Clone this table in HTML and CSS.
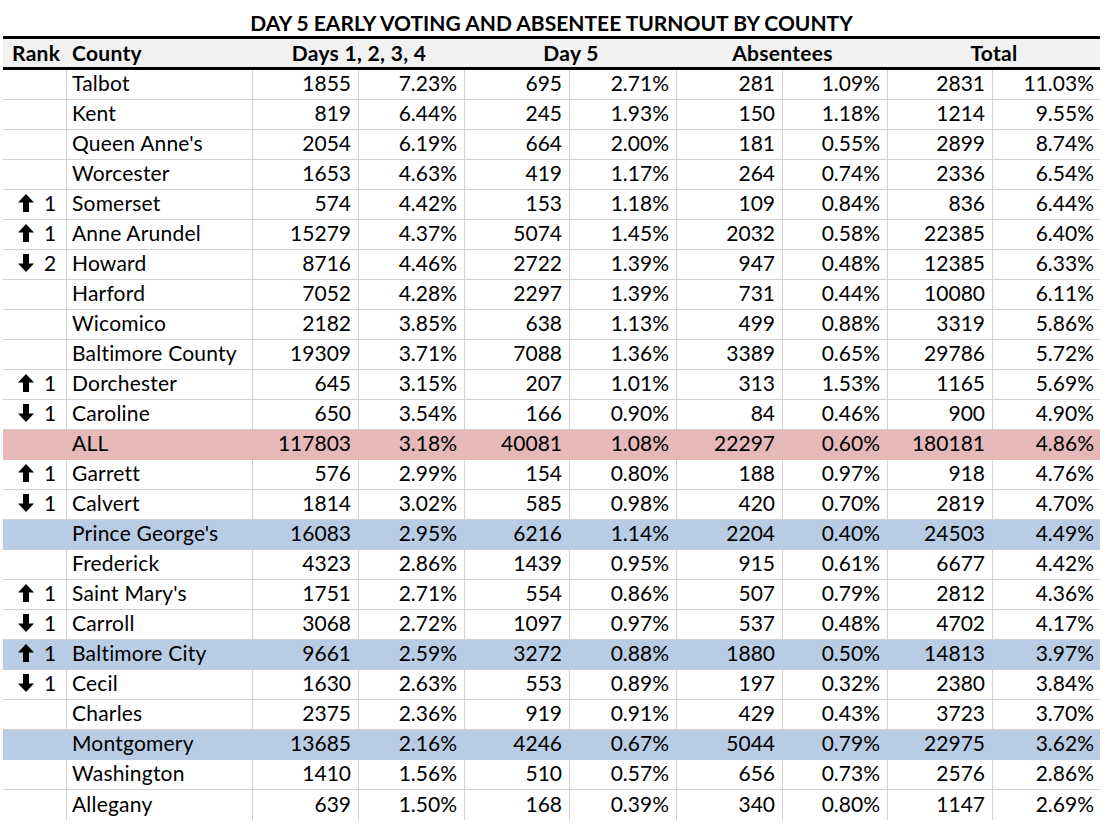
FILE: index.html
```html
<!DOCTYPE html>
<html lang="en">
<head>
<meta charset="utf-8">
<title>Day 5 Early Voting and Absentee Turnout by County</title>
<link rel="stylesheet" href="styles.css">
</head>
<body>
<div class="sheet">
  <h1 class="title">DAY 5 EARLY VOTING AND ABSENTEE TURNOUT BY COUNTY</h1>
  <table class="grid">
    <colgroup>
      <col class="c-rank"><col class="c-county">
      <col class="c-106"><col class="c-106">
      <col class="c-105"><col class="c-107">
      <col class="c-106"><col class="c-105">
      <col class="c-105"><col class="c-107">
    </colgroup>
    <thead>
      <tr>
        <th class="rank">Rank</th>
        <th class="county">County</th>
        <th colspan="2">Days 1, 2, 3, 4</th>
        <th colspan="2">Day 5</th>
        <th colspan="2">Absentees</th>
        <th colspan="2">Total</th>
      </tr>
    </thead>
    <tbody>
      <tr><td class="rank"></td><td class="county">Talbot</td><td>1855</td><td>7.23%</td><td>695</td><td>2.71%</td><td>281</td><td>1.09%</td><td>2831</td><td>11.03%</td></tr>
      <tr><td class="rank"></td><td class="county">Kent</td><td>819</td><td>6.44%</td><td>245</td><td>1.93%</td><td>150</td><td>1.18%</td><td>1214</td><td>9.55%</td></tr>
      <tr><td class="rank"></td><td class="county">Queen Anne's</td><td>2054</td><td>6.19%</td><td>664</td><td>2.00%</td><td>181</td><td>0.55%</td><td>2899</td><td>8.74%</td></tr>
      <tr><td class="rank"></td><td class="county">Worcester</td><td>1653</td><td>4.63%</td><td>419</td><td>1.17%</td><td>264</td><td>0.74%</td><td>2336</td><td>6.54%</td></tr>
      <tr><td class="rank"><span class="move"><svg class="arrow" viewBox="0 0 16 18"><polygon points="8,0 16,8.5 11,8.5 11,18 5,18 5,8.5 0,8.5"/></svg><span>1</span></span></td><td class="county">Somerset</td><td>574</td><td>4.42%</td><td>153</td><td>1.18%</td><td>109</td><td>0.84%</td><td>836</td><td>6.44%</td></tr>
      <tr><td class="rank"><span class="move"><svg class="arrow" viewBox="0 0 16 18"><polygon points="8,0 16,8.5 11,8.5 11,18 5,18 5,8.5 0,8.5"/></svg><span>1</span></span></td><td class="county">Anne Arundel</td><td>15279</td><td>4.37%</td><td>5074</td><td>1.45%</td><td>2032</td><td>0.58%</td><td>22385</td><td>6.40%</td></tr>
      <tr><td class="rank"><span class="move"><svg class="arrow down" viewBox="0 0 16 18"><polygon points="8,0 16,8.5 11,8.5 11,18 5,18 5,8.5 0,8.5"/></svg><span>2</span></span></td><td class="county">Howard</td><td>8716</td><td>4.46%</td><td>2722</td><td>1.39%</td><td>947</td><td>0.48%</td><td>12385</td><td>6.33%</td></tr>
      <tr><td class="rank"></td><td class="county">Harford</td><td>7052</td><td>4.28%</td><td>2297</td><td>1.39%</td><td>731</td><td>0.44%</td><td>10080</td><td>6.11%</td></tr>
      <tr><td class="rank"></td><td class="county">Wicomico</td><td>2182</td><td>3.85%</td><td>638</td><td>1.13%</td><td>499</td><td>0.88%</td><td>3319</td><td>5.86%</td></tr>
      <tr><td class="rank"></td><td class="county">Baltimore County</td><td>19309</td><td>3.71%</td><td>7088</td><td>1.36%</td><td>3389</td><td>0.65%</td><td>29786</td><td>5.72%</td></tr>
      <tr><td class="rank"><span class="move"><svg class="arrow" viewBox="0 0 16 18"><polygon points="8,0 16,8.5 11,8.5 11,18 5,18 5,8.5 0,8.5"/></svg><span>1</span></span></td><td class="county">Dorchester</td><td>645</td><td>3.15%</td><td>207</td><td>1.01%</td><td>313</td><td>1.53%</td><td>1165</td><td>5.69%</td></tr>
      <tr><td class="rank"><span class="move"><svg class="arrow down" viewBox="0 0 16 18"><polygon points="8,0 16,8.5 11,8.5 11,18 5,18 5,8.5 0,8.5"/></svg><span>1</span></span></td><td class="county">Caroline</td><td>650</td><td>3.54%</td><td>166</td><td>0.90%</td><td>84</td><td>0.46%</td><td>900</td><td>4.90%</td></tr>
      <tr class="hl-all"><td class="rank"></td><td class="county">ALL</td><td>117803</td><td>3.18%</td><td>40081</td><td>1.08%</td><td>22297</td><td>0.60%</td><td>180181</td><td>4.86%</td></tr>
      <tr><td class="rank"><span class="move"><svg class="arrow" viewBox="0 0 16 18"><polygon points="8,0 16,8.5 11,8.5 11,18 5,18 5,8.5 0,8.5"/></svg><span>1</span></span></td><td class="county">Garrett</td><td>576</td><td>2.99%</td><td>154</td><td>0.80%</td><td>188</td><td>0.97%</td><td>918</td><td>4.76%</td></tr>
      <tr><td class="rank"><span class="move"><svg class="arrow down" viewBox="0 0 16 18"><polygon points="8,0 16,8.5 11,8.5 11,18 5,18 5,8.5 0,8.5"/></svg><span>1</span></span></td><td class="county">Calvert</td><td>1814</td><td>3.02%</td><td>585</td><td>0.98%</td><td>420</td><td>0.70%</td><td>2819</td><td>4.70%</td></tr>
      <tr class="hl-blue"><td class="rank"></td><td class="county">Prince George's</td><td>16083</td><td>2.95%</td><td>6216</td><td>1.14%</td><td>2204</td><td>0.40%</td><td>24503</td><td>4.49%</td></tr>
      <tr><td class="rank"></td><td class="county">Frederick</td><td>4323</td><td>2.86%</td><td>1439</td><td>0.95%</td><td>915</td><td>0.61%</td><td>6677</td><td>4.42%</td></tr>
      <tr><td class="rank"><span class="move"><svg class="arrow" viewBox="0 0 16 18"><polygon points="8,0 16,8.5 11,8.5 11,18 5,18 5,8.5 0,8.5"/></svg><span>1</span></span></td><td class="county">Saint Mary's</td><td>1751</td><td>2.71%</td><td>554</td><td>0.86%</td><td>507</td><td>0.79%</td><td>2812</td><td>4.36%</td></tr>
      <tr><td class="rank"><span class="move"><svg class="arrow down" viewBox="0 0 16 18"><polygon points="8,0 16,8.5 11,8.5 11,18 5,18 5,8.5 0,8.5"/></svg><span>1</span></span></td><td class="county">Carroll</td><td>3068</td><td>2.72%</td><td>1097</td><td>0.97%</td><td>537</td><td>0.48%</td><td>4702</td><td>4.17%</td></tr>
      <tr class="hl-blue"><td class="rank"><span class="move"><svg class="arrow" viewBox="0 0 16 18"><polygon points="8,0 16,8.5 11,8.5 11,18 5,18 5,8.5 0,8.5"/></svg><span>1</span></span></td><td class="county">Baltimore City</td><td>9661</td><td>2.59%</td><td>3272</td><td>0.88%</td><td>1880</td><td>0.50%</td><td>14813</td><td>3.97%</td></tr>
      <tr><td class="rank"><span class="move"><svg class="arrow down" viewBox="0 0 16 18"><polygon points="8,0 16,8.5 11,8.5 11,18 5,18 5,8.5 0,8.5"/></svg><span>1</span></span></td><td class="county">Cecil</td><td>1630</td><td>2.63%</td><td>553</td><td>0.89%</td><td>197</td><td>0.32%</td><td>2380</td><td>3.84%</td></tr>
      <tr><td class="rank"></td><td class="county">Charles</td><td>2375</td><td>2.36%</td><td>919</td><td>0.91%</td><td>429</td><td>0.43%</td><td>3723</td><td>3.70%</td></tr>
      <tr class="hl-blue"><td class="rank"></td><td class="county">Montgomery</td><td>13685</td><td>2.16%</td><td>4246</td><td>0.67%</td><td>5044</td><td>0.79%</td><td>22975</td><td>3.62%</td></tr>
      <tr><td class="rank"></td><td class="county">Washington</td><td>1410</td><td>1.56%</td><td>510</td><td>0.57%</td><td>656</td><td>0.73%</td><td>2576</td><td>2.86%</td></tr>
      <tr class="last"><td class="rank"></td><td class="county">Allegany</td><td>639</td><td>1.50%</td><td>168</td><td>0.39%</td><td>340</td><td>0.80%</td><td>1147</td><td>2.69%</td></tr>
    </tbody>
  </table>
</div>
</body>
</html>
```

FILE: styles.css
```css
html, body {
  margin: 0;
  padding: 0;
  background: #ffffff;
}

body {
  font-family: Lato, "Open Sans", "Liberation Sans", sans-serif;
  color: #000000;
}

.sheet {
  width: 1097px;
  padding: 0 4px 0 3px;
}

.title {
  margin: 0;
  height: 36px;
  padding-top: 9px;
  box-sizing: border-box;
  line-height: 27px;
  font-size: 21px;
  font-weight: 700;
  text-align: center;
}

.grid {
  width: 1097px;
  table-layout: fixed;
  border-collapse: separate;
  border-spacing: 0;
  font-size: 21px;
}

.c-rank { width: 64px; }
.c-county { width: 186px; }
.c-105 { width: 105px; }
.c-106 { width: 106px; }
.c-107 { width: 107px; }

.grid thead th {
  height: 28px;
  padding: 0;
  background: #f2f2f2;
  border-top: 3px solid #000;
  border-bottom: 3px solid #000;
  font-weight: 700;
  text-align: center;
  line-height: 28px;
  letter-spacing: 0.3px;
}

.grid thead th.rank {
  text-align: left;
  padding-left: 9px;
}

.grid thead th.county {
  text-align: left;
  padding-left: 5px;
}

.grid tbody tr {
  height: 30px;
}

.grid tbody td {
  padding: 0 7px 3px 0;
  border-right: 1px solid #d2d2d2;
  border-bottom: 1px solid #d2d2d2;
  text-align: right;
  white-space: nowrap;
  line-height: 26px;
}

.grid tbody td:last-child {
  border-right: none;
  padding-right: 6px;
}

.grid tbody td.county {
  text-align: left;
  padding-left: 5px;
  letter-spacing: 0.2px;
}

.grid tbody td.rank {
  text-align: left;
  padding-left: 0;
}

.grid tbody tr.last td {
  border-bottom: none;
}

.move {
  display: flex;
  align-items: center;
  gap: 10px;
  padding-left: 15px;
}

.arrow {
  width: 16px;
  height: 18px;
  fill: #000;
}

.arrow.down {
  transform: rotate(180deg);
}

.grid tbody tr.hl-all td {
  background: #e6b8b7;
  border-color: #e6b8b7;
}

.grid tbody tr.hl-blue td {
  background: #b8cce4;
  border-color: #b8cce4;
}
```
